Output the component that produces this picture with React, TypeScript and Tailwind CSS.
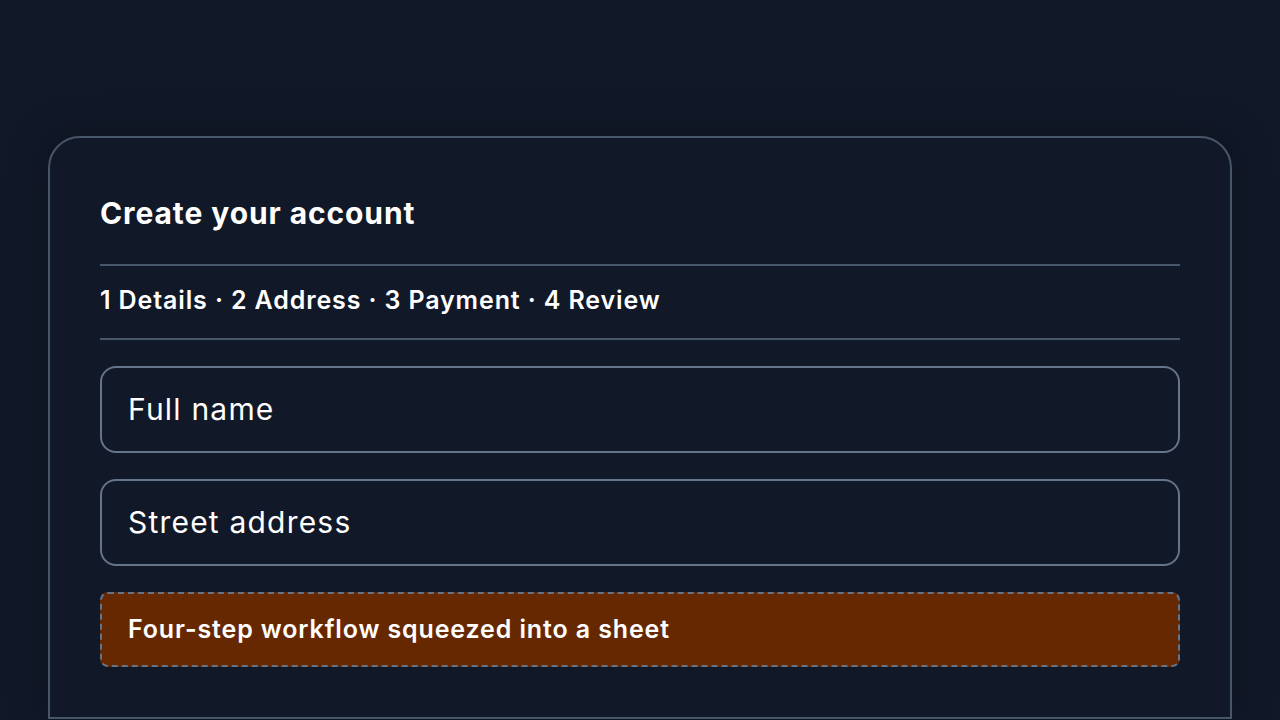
export default function App() {
  return (
    <div
      className="min-h-screen bg-[#111827] px-12 pt-[136px] text-white"
      style={{ fontFamily: "Inter, 'Noto Sans', sans-serif" }}
    >
      <div className="rounded-t-[32px] border-2 border-b-2 border-[#475569] bg-[#111827] px-[50px] pt-[50px] pb-[50px] shadow-[0_0_40px_rgba(0,0,0,0.25)]">
        <h2 className="text-[30px] font-bold leading-[50px] tracking-[0.03em]">Create your account</h2>

        <div className="mt-[26px] border-y-2 border-[#475569] pt-[16px] pb-[20px]">
          <p className="text-[25px] font-semibold leading-[36px] tracking-[0.035em]">
            1 Details · 2 Address · 3 Payment · 4 Review
          </p>
        </div>

        <div className="mt-[26px] flex flex-col gap-[26px]">
          <div className="flex h-[87px] items-center rounded-2xl border-2 border-[#64748b] px-[26px] text-[30px] tracking-[0.04em]">
            Full name
          </div>
          <div className="flex h-[87px] items-center rounded-2xl border-2 border-[#64748b] px-[26px] text-[30px] tracking-[0.04em]">
            Street address
          </div>
        </div>

        <div className="mt-[26px] flex h-[75px] items-center rounded-lg border-2 border-dashed border-[#64748b] bg-[#662800] px-[26px] text-[25px] font-semibold tracking-[0.035em]">
          Four-step workflow squeezed into a sheet
        </div>
      </div>
    </div>
  );
}
